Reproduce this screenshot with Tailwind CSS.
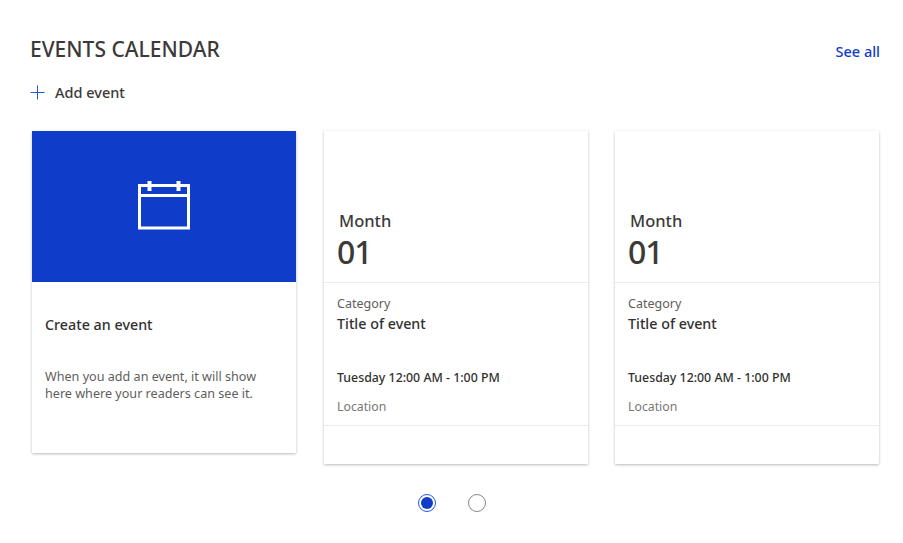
<!DOCTYPE html>
<html>
<head>
<meta charset="utf-8">
<script src="https://cdn.jsdelivr.net/npm/@tailwindcss/browser@4"></script>
</head>
<body class="bg-white font-['Noto_Sans',sans-serif] text-[#323130]">
<div class="w-[903px] h-[543px] overflow-hidden pl-[30px] pr-[23px] pt-[35px]">
  <div class="flex items-center justify-between h-[28px]">
    <h1 class="text-[21px] font-medium leading-[28px] text-[#3b3a39]">EVENTS CALENDAR</h1>
    <a class="text-[14.5px] font-medium text-[#0f3cc9] leading-[28px] mt-[4px]">See all</a>
  </div>
  <div class="flex items-center h-[20px] mt-[19px]">
    <svg class="w-[15px] h-[15px]" viewBox="0 0 15 15" fill="none" stroke="#2a55e0" stroke-width="1"><path d="M7.5 0.5v14M0.5 7.5h14"/></svg>
    <span class="ml-[10px] text-[14.5px] font-medium text-[#3b3a39] leading-[20px]">Add event</span>
  </div>
  <div class="flex items-start pl-[2px] mt-[29px]">
    <div class="w-[264px] h-[322px] mr-[28px] bg-white shadow-[0_1px_3px_rgba(0,0,0,0.28)] rounded-[1px]">
      <div class="h-[151px] bg-[#0f3cc9] flex items-center justify-center">
        <svg class="w-[52px] h-[49px] mt-[-2px]" viewBox="0 0 52 49" fill="none" stroke="white"><rect x="1.5" y="4.5" width="49" height="42.5" stroke-width="3"/><path d="M1.5 14.5h49" stroke-width="3"/><path d="M11.5 0v10M40.5 0v10" stroke-width="4"/></svg>
      </div>
      <div class="px-[13px]">
        <div class="mt-[32px] text-[14.3px] font-medium leading-[22px] text-[#323130]">Create an event</div>
        <p class="mt-[32px] text-[12.6px] leading-[17px] text-[#605e5c]">When you add an event, it will show<br>here where your readers can see it.</p>
      </div>
    </div>

    <div class="w-[264px] h-[333px] mr-[27px] bg-white shadow-[0_1px_3px_rgba(0,0,0,0.28)] rounded-[1px] flex flex-col">
      <div class="h-[152px] border-b border-[#edebe9] pl-[13px] pt-[79px]">
        <div class="pl-[2px] text-[16.5px] leading-[22px] font-medium text-[#3b3a39]">Month</div>
        <div class="text-[32px] leading-[40px] font-medium tracking-[-1px] text-[#3b3a39]">01</div>
      </div>
      <div class="h-[143px] border-b border-[#edebe9] px-[13px] pt-[13px]">
        <div class="text-[12.5px] leading-[16px] text-[#605e5c]">Category</div>
        <div class="text-[14.3px] leading-[22px] font-medium text-[#323130] mt-[1px]">Title of event</div>
        <div class="text-[12.35px] leading-[18px] font-medium text-[#323130] mt-[34px]">Tuesday 12:00 AM - 1:00 PM</div>
        <div class="text-[12.3px] leading-[18px] text-[#797775] mt-[11px]">Location</div>
      </div>
    </div>

    <div class="w-[264px] h-[333px] bg-white shadow-[0_1px_3px_rgba(0,0,0,0.28)] rounded-[1px] flex flex-col">
      <div class="h-[152px] border-b border-[#edebe9] pl-[13px] pt-[79px]">
        <div class="pl-[2px] text-[16.5px] leading-[22px] font-medium text-[#3b3a39]">Month</div>
        <div class="text-[32px] leading-[40px] font-medium tracking-[-1px] text-[#3b3a39]">01</div>
      </div>
      <div class="h-[143px] border-b border-[#edebe9] px-[13px] pt-[13px]">
        <div class="text-[12.5px] leading-[16px] text-[#605e5c]">Category</div>
        <div class="text-[14.3px] leading-[22px] font-medium text-[#323130] mt-[1px]">Title of event</div>
        <div class="text-[12.35px] leading-[18px] font-medium text-[#323130] mt-[34px]">Tuesday 12:00 AM - 1:00 PM</div>
        <div class="text-[12.3px] leading-[18px] text-[#797775] mt-[11px]">Location</div>
      </div>
    </div>
  </div>
  <div class="flex justify-center gap-[32px] mt-[30px] pr-[7px]">
    <span class="w-[18px] h-[18px] rounded-full border border-[#2a55e0] flex items-center justify-center"><span class="w-[12px] h-[12px] rounded-full bg-[#0f3cc9]"></span></span>
    <span class="w-[18px] h-[18px] rounded-full border border-[#8a8886]"></span>
  </div>
</div>
</body>
</html>
